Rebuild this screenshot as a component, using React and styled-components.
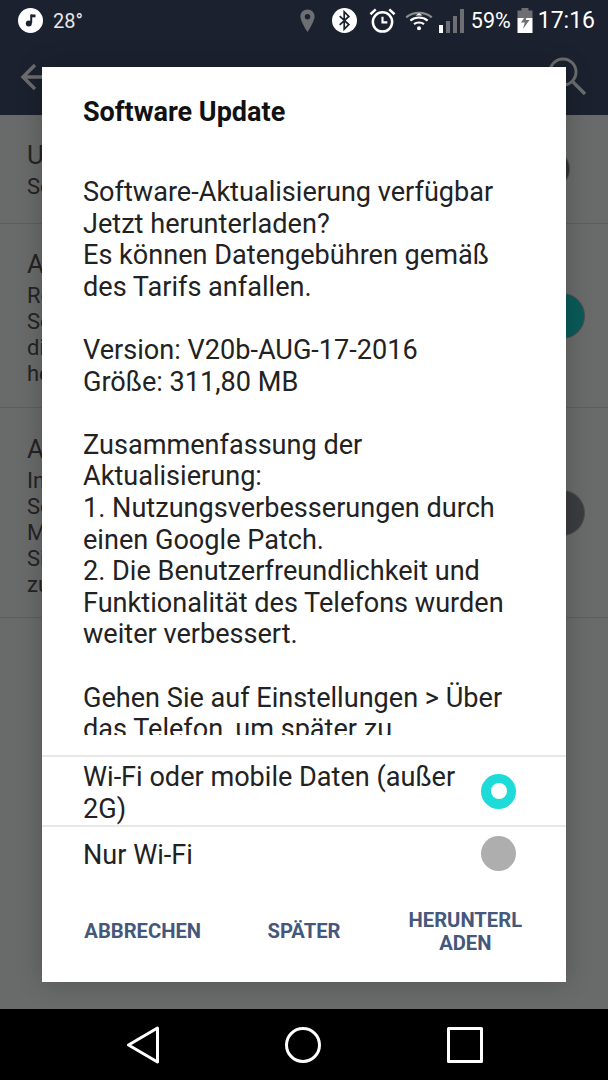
import styled, { createGlobalStyle } from "styled-components";

const GlobalStyle = createGlobalStyle`
	html, body {
		margin: 0;
		padding: 0;
		background: #000;
	}
	* {
		box-sizing: border-box;
	}
`;

const rows = [
	{ title: "Update", lines: ["Software"], knob: "#303235", size: 38, right: 39, height: 109, pad: 23 },
	{
		title: "Automatisch",
		lines: ["Regelmäßig", "Software", "die", "herunterladen"],
		knob: "#0a5a58",
		size: 44,
		right: 24,
		height: 184,
		pad: 23,
	},
	{
		title: "Aktualisieren",
		lines: ["Installieren", "Software", "Mobile", "Sie", "zu"],
		knob: "#3a3c3f",
		size: 44,
		right: 24,
		height: 210,
		pad: 24,
	},
];

const App = () => {
	return (
		<Phone>
			<GlobalStyle />
			<StatusBar>
				<StatusLeft>
					<svg width="25" height="25" viewBox="0 0 25 25">
						<circle cx="12.500" cy="12.500" r="12.500" fill="#fff" />
						<path d="M13.200 6.500v8.500" stroke="#1b212e" strokeWidth="2" fill="none" />
						<path d="M13 6.500h4.500v2.800H13z" fill="#1b212e" />
						<circle cx="10.800" cy="15.500" r="3" fill="#1b212e" />
					</svg>
					<Temp>28°</Temp>
				</StatusLeft>
				<StatusRight>
					<StatusIcon $gap={16}>
						<svg width="17" height="24" viewBox="0 0 18 26">
							<path
								fillRule="evenodd"
								d="M9 0.500C4.400 0.500 1.300 4 1.300 8.200 1.300 13.500 9 25 9 25s7.700-11.500 7.700-16.800C16.700 4 13.600 0.500 9 0.500zM9 5.400a3 3 0 1 1 0 6 3 3 0 0 1 0-6z"
								fill="#6e6f72"
							/>
						</svg>
					</StatusIcon>
					<StatusIcon $gap={12}>
						<svg width="25" height="25" viewBox="0 0 26 26">
							<circle cx="13" cy="13" r="13" fill="#fff" />
							<path
								d="M8 8.500l9.500 8.800-4.800 4.700V4l4.800 4.700L8 17.500"
								stroke="#1b212e"
								strokeWidth="1.800"
								fill="none"
							/>
						</svg>
					</StatusIcon>
					<StatusIcon $gap={9}>
						<svg width="27" height="27" viewBox="0 0 28 28">
							<circle cx="14" cy="15.500" r="10" stroke="#fff" strokeWidth="2.600" fill="none" />
							<path d="M14 10v6h5" stroke="#fff" strokeWidth="2.200" fill="none" />
							<path d="M1.500 7.500L7 2.500M26.500 7.500L21 2.500" stroke="#fff" strokeWidth="2.600" fill="none" />
						</svg>
					</StatusIcon>
					<StatusIcon $gap={6}>
						<svg width="28" height="20" viewBox="0 0 30 22">
							<path d="M1 7C8.500 0.500 21.500 0.500 29 7" stroke="#8a8b8e" strokeWidth="2.600" fill="none" />
							<path d="M5.500 10.500C11 6 19 6 24.500 10.500" stroke="#fff" strokeWidth="2.400" fill="none" />
							<path d="M9.500 14.500C12.500 12 17.500 12 20.500 14.500" stroke="#fff" strokeWidth="2.400" fill="none" />
							<path d="M11 5l4-2.500L19 5z" fill="#fff" />
							<circle cx="15" cy="19" r="2.200" fill="#fff" />
						</svg>
					</StatusIcon>
					<Signal>
						<SignalBar $height={8} $on />
						<SignalBar $height={12} />
						<SignalBar $height={17} />
						<SignalBar $height={24} />
					</Signal>
					<Percent>59%</Percent>
					<StatusIcon $gap={5}>
						<svg width="16" height="25" viewBox="0 0 16 25">
							<path d="M4.500 0h7v2.500H15.500V10H0.500V2.500h4z" fill="#6e6f72" />
							<path d="M0.500 10H15.500V25H0.500z" fill="#fff" />
							<path d="M10.500 5L4 14.500h3.800L6 21l6.500-9H8.800z" fill="#6e6f72" />
						</svg>
					</StatusIcon>
					<Clock>17:16</Clock>
				</StatusRight>
			</StatusBar>
			<AppBar>
				<svg width="34" height="34" viewBox="0 0 34 34">
					<path d="M32 17H4M16 5L4 17l12 12" stroke="#6b6c6e" strokeWidth="3.400" fill="none" />
				</svg>
				<svg width="40" height="40" viewBox="0 0 40 40">
					<circle cx="15" cy="15" r="13" stroke="#6b6c6e" strokeWidth="3" fill="none" />
					<path d="M24.500 24.500L37 37" stroke="#6b6c6e" strokeWidth="3.400" fill="none" />
				</svg>
			</AppBar>
			<Settings>
				{rows.map((row) => (
					<SettingRow key={row.title} $height={row.height} $right={row.right}>
						<SettingText $pad={row.pad}>
							<SettingTitle>{row.title}</SettingTitle>
							{row.lines.map((line) => (
								<SettingLine key={line}>{line}</SettingLine>
							))}
						</SettingText>
						<Knob $color={row.knob} $size={row.size} />
					</SettingRow>
				))}
			</Settings>
			<NavBar>
				<svg width="34" height="38" viewBox="0 0 34 38">
					<path d="M31.500 2L2.500 19l29 17z" stroke="#fff" strokeWidth="3" strokeLinejoin="round" fill="none" />
				</svg>
				<svg width="38" height="38" viewBox="0 0 38 38">
					<circle cx="19" cy="19" r="16.500" stroke="#fff" strokeWidth="3" fill="none" />
				</svg>
				<svg width="38" height="38" viewBox="0 0 38 38">
					<rect x="2.500" y="2.500" width="33" height="33" stroke="#fff" strokeWidth="3" strokeLinejoin="round" fill="none" />
				</svg>
			</NavBar>
			<Dialog>
				<DialogTitle>Software Update</DialogTitle>
				<DialogBody>
					<p>
						Software-Aktualisierung verfügbar
						<br />
						Jetzt herunterladen?
						<br />
						Es können Datengebühren gemäß
						<br />
						des Tarifs anfallen.
					</p>
					<p>
						Version: V20b-AUG-17-2016
						<br />
						Größe: 311,80 MB
					</p>
					<p>
						Zusammenfassung der
						<br />
						Aktualisierung:
						<br />
						1. Nutzungsverbesserungen durch
						<br />
						einen Google Patch.
						<br />
						2. Die Benutzerfreundlichkeit und
						<br />
						Funktionalität des Telefons wurden
						<br />
						weiter verbessert.
					</p>
					<p>
						Gehen Sie auf Einstellungen &gt; Über
						<br />
						das Telefon, um später zu
					</p>
				</DialogBody>
				<Option $height={70}>
					<OptionLabel>Wi-Fi oder mobile Daten (außer 2G)</OptionLabel>
					<Radio $checked />
				</Option>
				<Option $height={54}>
					<OptionLabel>Nur Wi-Fi</OptionLabel>
					<Radio />
				</Option>
				<Actions>
					<ActionButton>ABBRECHEN</ActionButton>
					<ActionButton>SPÄTER</ActionButton>
					<ActionButton>
						HERUNTERL
						<br />
						ADEN
					</ActionButton>
				</Actions>
			</Dialog>
		</Phone>
	);
};

const Phone = styled.div`
	position: relative;
	width: 608px;
	height: 1080px;
	display: flex;
	flex-direction: column;
	overflow: hidden;
	font-family: Roboto, "Liberation Sans", sans-serif;
	background: #696a6a;
`;

const StatusBar = styled.div`
	height: 39px;
	padding: 2px 13px 0 18px;
	display: flex;
	align-items: center;
	justify-content: space-between;
	background: #1b212e;
	color: #fff;
`;

const StatusLeft = styled.div`
	display: flex;
	align-items: center;
	gap: 10px;
`;

const Temp = styled.span`
	font-size: 20px;
	color: #e6e7e9;
`;

const StatusRight = styled.div`
	display: flex;
	align-items: center;
`;

const StatusIcon = styled.span`
	display: flex;
	margin-right: ${(p) => p.$gap}px;
`;

const Signal = styled.div`
	display: flex;
	align-items: flex-end;
	gap: 3px;
	height: 24px;
	margin-right: 7px;
`;

const SignalBar = styled.span`
	width: 4px;
	height: ${(p) => p.$height}px;
	background: ${(p) => (p.$on ? "#fff" : "#6e6f72")};
`;

const Percent = styled.span`
	font-size: 21.500px;
	margin-right: 6px;
`;

const Clock = styled.span`
	font-size: 23px;
`;

const AppBar = styled.div`
	height: 76px;
	padding: 0 20px 0 19px;
	display: flex;
	align-items: center;
	justify-content: space-between;
	background: #1b212e;
`;

const Settings = styled.div`
	flex: 1;
`;

const SettingRow = styled.div`
	height: ${(p) => p.$height}px;
	padding: 0 ${(p) => p.$right}px 0 27px;
	display: flex;
	justify-content: space-between;
	align-items: center;
	border-bottom: 1px solid #5c5d5d;
`;

const SettingText = styled.div`
	align-self: flex-start;
	padding-top: ${(p) => p.$pad}px;
`;

const SettingTitle = styled.div`
	margin-bottom: 2px;
	font-size: 26px;
	line-height: 34px;
	color: #232324;
`;

const SettingLine = styled.div`
	font-size: 22px;
	line-height: 26px;
	color: #232324;
`;

const Knob = styled.div`
	width: ${(p) => p.$size}px;
	height: ${(p) => p.$size}px;
	border-radius: 50%;
	background: ${(p) => p.$color};
	box-shadow: 0 0 0 1px #4a4b4c;
`;

const NavBar = styled.div`
	height: 71px;
	padding: 0 124px 0 126px;
	display: flex;
	align-items: center;
	justify-content: space-between;
	background: #000;
`;

const Dialog = styled.div`
	position: absolute;
	top: 67px;
	left: 42px;
	width: 524px;
	height: 915px;
	display: flex;
	flex-direction: column;
	background: #fff;
	box-shadow: 0 0 24px rgba(0, 0, 0, 0.22);
`;

const DialogTitle = styled.h2`
	margin: 0;
	padding: 29px 41px 0;
	height: 92px;
	font-size: 27px;
	line-height: 32px;
	font-weight: 700;
	color: #111;
`;

const DialogBody = styled.div`
	height: 576px;
	flex: none;
	margin-bottom: 20px;
	padding: 18px 41px 0;
	overflow: hidden;
	font-size: 27.100px;
	line-height: 31.600px;
	color: #222;

	p {
		margin: 0 0 31.600px;
	}
`;

const Option = styled.div`
	height: ${(p) => p.$height}px;
	padding: 0 50px 0 41px;
	display: flex;
	align-items: center;
	justify-content: space-between;
	border-top: 2px solid #e8e8e8;
`;

const OptionLabel = styled.span`
	width: 385px;
	padding-top: 6px;
	font-size: 27.100px;
	line-height: 31.600px;
	color: #222;
`;

const Radio = styled.span`
	flex: none;
	width: 35px;
	height: 35px;
	display: flex;
	align-items: center;
	justify-content: center;
	border-radius: 50%;
	background: ${(p) => (p.$checked ? "#1cdbd8" : "#aeaeae")};

	&::after {
		content: "";
		display: ${(p) => (p.$checked ? "block" : "none")};
		width: 16px;
		height: 16px;
		border-radius: 50%;
		background: #fff;
	}
`;

const Actions = styled.div`
	flex: 1;
	padding: 3px 20px 0;
	display: flex;
	align-items: center;
`;

const ActionButton = styled.div`
	flex: 1;
	text-align: center;
	font-size: 20.200px;
	line-height: 23.500px;
	font-weight: 700;
	color: #44587c;
`;

export default App;
